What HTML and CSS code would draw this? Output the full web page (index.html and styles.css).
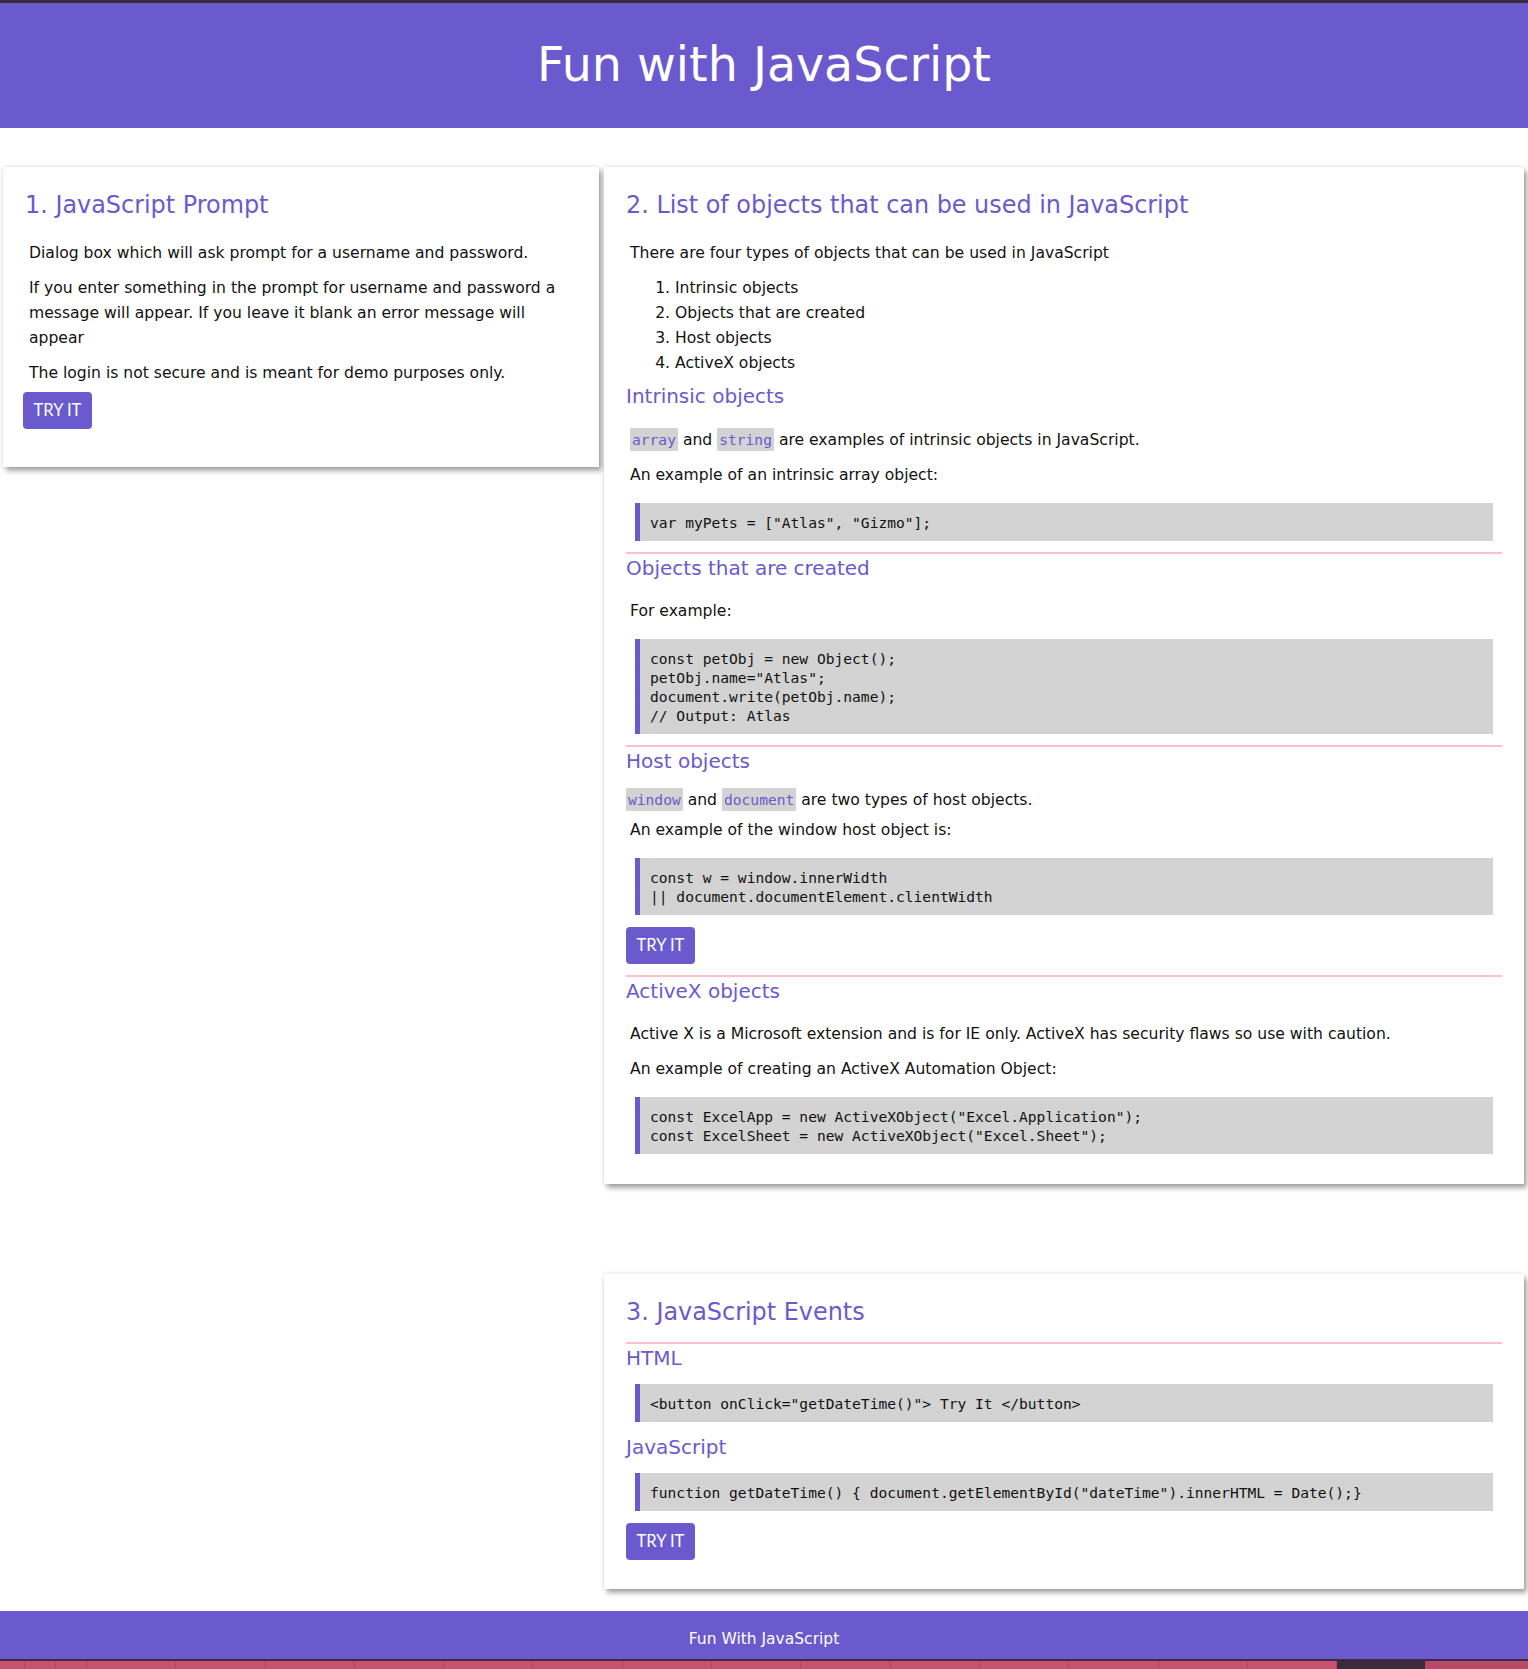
FILE: index.html
```html
<!DOCTYPE html>
<html lang="en">
<head>
<meta charset="utf-8">
<title>Fun with JavaScript</title>
<link rel="stylesheet" href="styles.css">
</head>
<body>
<div class="topline"></div>
<header class="site-header">
  <h1 class="site-title">Fun with JavaScript</h1>
</header>

<main class="layout">
  <section class="card card-prompt">
    <h2 class="card-title">1. JavaScript Prompt</h2>
    <p class="txt">Dialog box which will ask prompt for a username and password.</p>
    <p class="txt">If you enter something in the prompt for username and password a message will appear. If you leave it blank an error message will appear</p>
    <p class="txt">The login is not secure and is meant for demo purposes only.</p>
    <button class="btn btn-first" type="button">TRY IT</button>
  </section>

  <section class="card card-objects">
    <h2 class="card-title">2. List of objects that can be used in JavaScript</h2>
    <p class="txt">There are four types of objects that can be used in JavaScript</p>
    <ol class="types">
      <li>Intrinsic objects</li>
      <li>Objects that are created</li>
      <li>Host objects</li>
      <li>ActiveX objects</li>
    </ol>
    <h3 class="sub-title">Intrinsic objects</h3>
    <p class="txt"><code class="inl">array</code> and <code class="inl">string</code> are examples of intrinsic objects in JavaScript.</p>
    <p class="txt">An example of an intrinsic array object:</p>
    <pre class="code">var myPets = ["Atlas", "Gizmo"];</pre>

    <div class="sub">
      <h3 class="sub-title">Objects that are created</h3>
      <p class="txt">For example:</p>
      <pre class="code">const petObj = new Object();
petObj.name="Atlas";
document.write(petObj.name);
// Output: Atlas</pre>
    </div>

    <div class="sub">
      <h3 class="sub-title">Host objects</h3>
      <div class="plain"><code class="inl">window</code> and <code class="inl">document</code> are two types of host objects.</div>
      <p class="txt txt-tight">An example of the window host object is:</p>
      <pre class="code">const w = window.innerWidth
|| document.documentElement.clientWidth</pre>
      <button class="btn" type="button">TRY IT</button>
    </div>

    <div class="sub">
      <h3 class="sub-title">ActiveX objects</h3>
      <p class="txt">Active X is a Microsoft extension and is for IE only. ActiveX has security flaws so use with caution.</p>
      <p class="txt">An example of creating an ActiveX Automation Object:</p>
      <pre class="code">const ExcelApp = new ActiveXObject("Excel.Application");
const ExcelSheet = new ActiveXObject("Excel.Sheet");</pre>
    </div>
  </section>

  <section class="card card-events">
    <h2 class="card-title">3. JavaScript Events</h2>
    <div class="sub">
      <h3 class="sub-title">HTML</h3>
      <pre class="code">&lt;button onClick="getDateTime()"&gt; Try It &lt;/button&gt;</pre>
      <h3 class="sub-title">JavaScript</h3>
      <pre class="code">function getDateTime() { document.getElementById("dateTime").innerHTML = Date();}</pre>
      <button class="btn" type="button">TRY IT</button>
    </div>
  </section>
</main>

<footer class="site-footer">Fun With JavaScript</footer>
<div class="bottomline"></div>
<div class="strip">
  <span class="seg seg-s1"></span><span class="seg seg-s2"></span><span class="seg seg-s2"></span>
  <span class="seg"></span><span class="seg"></span><span class="seg"></span><span class="seg"></span>
  <span class="seg"></span><span class="seg"></span><span class="seg"></span><span class="seg"></span>
  <span class="seg"></span><span class="seg"></span><span class="seg"></span><span class="seg"></span>
  <span class="seg"></span><span class="seg"></span>
  <span class="seg seg-dark"></span>
  <span class="seg seg-end"></span>
</div>
</body>
</html>
```

FILE: styles.css
```css
* { box-sizing: border-box; }

html, body {
  margin: 0;
  padding: 0;
  background: #ffffff;
}

body {
  font-family: "DejaVu Sans", "Open Sans", sans-serif;
  font-size: 15.6px;
  line-height: 25px;
  color: #111111;
}

.topline {
  height: 3px;
  background: #3b2b3d;
}

.site-header {
  background: #6a5acd;
  height: 125px;
  display: flex;
  align-items: center;
  justify-content: center;
}

.site-title {
  margin: 0;
  font-size: 47.5px;
  line-height: 56px;
  font-weight: normal;
  color: #ffffff;
  padding-bottom: 2px;
}

.layout {
  display: grid;
  grid-template-columns: 596px 920px;
  column-gap: 5px;
  row-gap: 90px;
  align-items: start;
  padding: 39px 4px 22px 3px;
}

.card {
  background: #ffffff;
  padding: 22px 22px 18px 22px;
  box-shadow: 0 0 4px rgba(0, 0, 0, 0.14), 3px 4px 5px rgba(0, 0, 0, 0.33);
}

.card-prompt {
  grid-column: 1;
  grid-row: 1;
  padding-bottom: 27px;
}

.card-objects {
  grid-column: 2;
  grid-row: 1;
  padding-bottom: 19px;
}

.card-events {
  grid-column: 2;
  grid-row: 2;
}

.card-title {
  margin: 0 0 14px 0;
  font-size: 23.9px;
  line-height: 32px;
  font-weight: normal;
  color: #6a5acd;
}

.sub-title {
  margin: 0 0 13px 0;
  font-size: 20px;
  line-height: 25px;
  font-weight: normal;
  color: #6a5acd;
}

.sub {
  border-top: 2px solid #ffc0cb;
  padding-top: 2px;
}

.txt {
  margin: 10px 0 5px 0;
  padding-left: 4px;
}

.card-title + .txt { margin-top: 20px; }
.sub-title + .txt { margin-top: 18px; }
.txt-tight { margin-top: 5px; }

.types {
  margin: 10px 0 8px 0;
  padding-left: 49px;
}

.inl {
  font-family: "DejaVu Sans Mono", "Liberation Mono", monospace;
  font-size: 14.6px;
  background: #d3d3d3;
  color: #6a5acd;
  padding: 3px 2px;
}

.code {
  font-family: "DejaVu Sans Mono", "Liberation Mono", monospace;
  font-size: 14.6px;
  line-height: 19px;
  background: #d3d3d3;
  border-left: 5px solid #6a5acd;
  color: #111111;
  margin: 15px 9px 11px 9px;
  padding: 10px 10px 9px 10px;
  white-space: pre;
}

.sub-title + .code { margin-top: 13px; }
.code + .sub-title { margin-top: 13px; }

.btn {
  display: inline-block;
  font-family: Lato, "Open Sans", sans-serif;
  font-size: 16.5px;
  line-height: 37px;
  height: 37px;
  padding: 0 10.5px;
  background: #6a5acd;
  color: #ffffff;
  border: none;
  border-radius: 4px;
  margin: 1px 0 11px 0;
  vertical-align: top;
}

.btn-first {
  margin-left: -2px;
}

.site-footer {
  background: #6a5acd;
  color: #ffffff;
  height: 48px;
  display: flex;
  align-items: center;
  justify-content: center;
  padding-top: 8px;
  font-size: 15.5px;
}

.bottomline {
  height: 2px;
  background: #3b2b3d;
}

.strip {
  display: flex;
  height: 8px;
  background: #c85070;
}

.seg {
  flex: 0 0 89.3px;
  border-right: 1px solid #b54564;
}

.seg-s1 { flex-basis: 25px; }
.seg-s2 { flex-basis: 31px; }

.seg-dark {
  flex-basis: 88px;
  background: #3b2b3d;
  border-right: none;
}

.seg-end {
  flex: 1 1 auto;
  background: #b84868;
  border-right: none;
}
```
